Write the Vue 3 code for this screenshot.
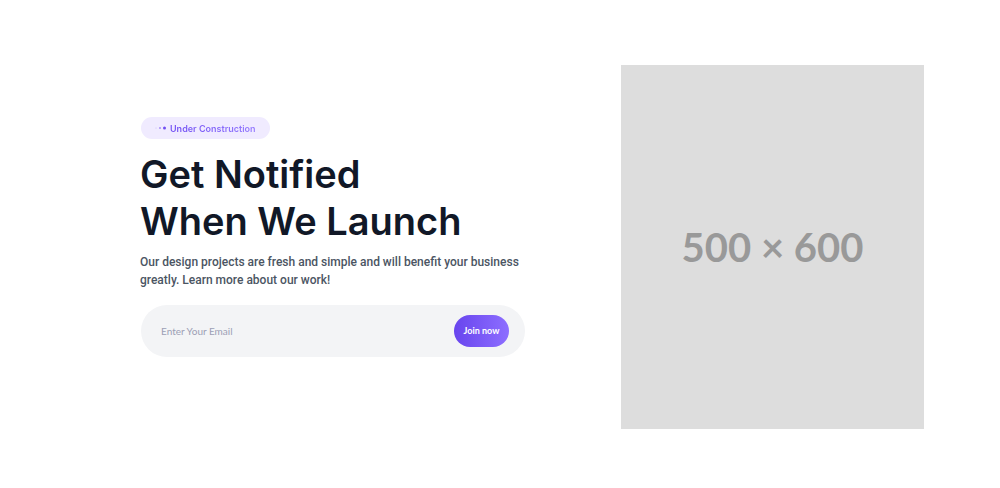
<script setup>
import { ref } from 'vue'
const email = ref('')
</script>

<template>
  <main class="hero">
    <section class="copy">
      <p class="badge">
        <svg class="dots" viewBox="0 0 12 6" aria-hidden="true">
          <circle cx="1" cy="3" r="0.6" opacity="0.3" />
          <circle cx="5" cy="3" r="1" opacity="0.6" />
          <circle cx="9.5" cy="3" r="1.5" />
        </svg>
        <span class="badge-text">Under Construction</span>
      </p>
      <h1>Get Notified<br />When We Launch</h1>
      <p class="lead">Our design projects are fresh and simple and will benefit your business<br />greatly. Learn more about our work!</p>
      <form class="signup" @submit.prevent>
        <input v-model="email" type="email" placeholder="Enter Your Email" aria-label="Enter Your Email" />
        <button type="submit">Join now</button>
      </form>
    </section>
    <div class="picture" role="img" aria-label="500 × 600">500 × 600</div>
  </main>
</template>

<style>
body {
  margin: 0;
  background: #fff;
}
</style>

<style scoped>
.hero {
  box-sizing: border-box;
  min-height: 100vh;
  padding: 65px 76px 60px 140px;
  display: grid;
  grid-template-columns: minmax(0, 385fr) minmax(0, 303fr);
  column-gap: 96px;
  align-items: start;
  font-family: Lato, "Noto Sans", sans-serif;
}
.copy {
  padding-top: 52px;
  white-space: nowrap;
}
.badge {
  box-sizing: border-box;
  width: fit-content;
  height: 22px;
  margin: 0 0 12px 1px;
  padding: 0 14px;
  display: flex;
  align-items: center;
  gap: 3px;
  border-radius: 11px;
  background: #f0ebff;
  color: #714ff3;
  font-family: Inter, sans-serif;
  font-size: 9px;
  font-weight: 600;
}
.dots {
  width: 12px;
  height: 6px;
  fill: #714ff3;
}
.badge-text {
  background: linear-gradient(90deg, #714ff3, #977dff);
  background-clip: text;
  color: transparent;
}
h1 {
  margin: 0;
  color: #111827;
  font-family: Inter, sans-serif;
  font-size: 38px;
  line-height: 47px;
  font-weight: 600;
}
.lead {
  margin: 8px 0 16px;
  color: #4b5563;
  font-family: Roboto, sans-serif;
  font-size: 12px;
  line-height: 18px;
  font-weight: 500;
}
.signup {
  box-sizing: border-box;
  height: 52px;
  margin-left: 1px;
  padding: 0 16px 0 20px;
  display: flex;
  align-items: center;
  gap: 12px;
  border-radius: 26px;
  background: #f3f4f6;
}
input {
  flex: 1;
  min-width: 0;
  padding: 0;
  border: 0;
  outline: 0;
  background: transparent;
  color: #111827;
  font: 400 10px/16px Lato, sans-serif;
}
input::placeholder {
  color: #9c9fb5;
  opacity: 1;
}
button {
  width: 55px;
  height: 32px;
  padding: 0;
  border: 0;
  border-radius: 16px;
  background: linear-gradient(90deg, #6845ee, #8d6eff);
  color: #fff;
  font: 700 9px/16px Lato, sans-serif;
}
.picture {
  aspect-ratio: 5 / 6;
  display: flex;
  align-items: center;
  justify-content: center;
  background: #ddd;
  color: #999;
  font-size: 40px;
  font-weight: 700;
}
</style>
